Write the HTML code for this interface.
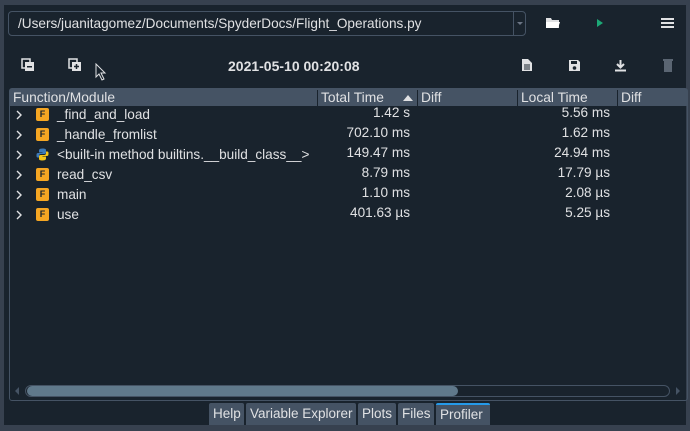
<!DOCTYPE html>
<html><head><style>
*{margin:0;padding:0;box-sizing:border-box}
body{width:690px;height:431px;background:#19232d;font-family:"Liberation Sans",sans-serif;color:#e0e1e3;position:relative;overflow:hidden;font-size:13px}
.abs{position:absolute}
.combo{left:8px;top:11px;width:518px;height:25px;border:1px solid #455364;border-radius:4px;background:#19232d}
.combo span{position:absolute;left:9px;top:4px;font-size:13.6px}
.combo .dd{position:absolute;right:0;top:0;width:12px;height:23px;border-left:1px solid #455364}
.table{left:9px;top:88px;width:679px;height:313px;border:1px solid #455364;border-radius:3px}
.hdr{left:10px;top:89px;width:677px;height:17px;background:#455364}
.hdr div{position:absolute;top:1px;font-size:13.8px;color:#e0e1e3;height:17px;border-right:1px solid #19232d;padding-left:3px}
.row{position:absolute;left:10px;height:20px;width:676px;font-size:13.6px}
.row .chev{position:absolute;left:6px;top:5px}
.F{position:absolute;left:26px;top:3px;width:13px;height:13px;background:#f5a623;border-radius:2px;color:#19232d;font-size:9px;font-weight:bold;text-align:center;line-height:13px}
.row .nm{position:absolute;left:47px;top:2px}
.row .t{position:absolute;right:276px;top:0}
.row .l{position:absolute;right:76px;top:0}
.tab{position:absolute;top:403px;height:22px;background:#455364;border-radius:2px 2px 0 0;font-size:13.5px;padding:3px 4px 0;color:#e0e1e3;white-space:nowrap}
</style></head><body>
<div class="abs" style="left:0;top:0;width:690px;height:5px;background:#37414f"></div>
<div class="abs" style="left:0;top:0;width:4px;height:431px;background:#37414f"></div>
<div class="abs" style="left:686px;top:0;width:4px;height:431px;background:#37414f"></div>
<div class="abs" style="left:0;top:425px;width:690px;height:6px;background:#37414f"></div>
<div class="abs combo"><span>/Users/juanitagomez/Documents/SpyderDocs/Flight_Operations.py</span><div class="dd"><div style="position:absolute;left:3px;top:10px;border-left:3px solid transparent;border-right:3px solid transparent;border-top:3px solid #6c7685"></div></div></div>
<svg class="abs" style="left:545px;top:16px" width="16" height="13"><path d="M1 2h5l1 2h7v8H1z" fill="#e0e1e3"/><path d="M1 6h14l-2 6H1z" fill="#fff"/></svg>
<svg class="abs" style="left:596px;top:18px" width="8" height="10"><path d="M1 1l6 4-6 4z" fill="#1ca876"/></svg>
<svg class="abs" style="left:661px;top:18px" width="13" height="10"><path d="M0 1h13M0 5h13M0 9h13" stroke="#e0e1e3" stroke-width="2"/></svg>
<svg class="abs" style="left:21px;top:58px" width="14" height="14"><rect x="1" y="1" width="8" height="9" fill="none" stroke="#e0e1e3" stroke-width="1.5"/><rect x="4" y="4" width="9" height="9" fill="#e0e1e3"/><rect x="6" y="8" width="5" height="1.5" fill="#19232d"/></svg>
<svg class="abs" style="left:68px;top:58px" width="14" height="14"><rect x="1" y="1" width="8" height="9" fill="none" stroke="#e0e1e3" stroke-width="1.5"/><rect x="4" y="4" width="9" height="9" fill="#e0e1e3"/><path d="M6 8.5h5M8.5 6v5" stroke="#19232d" stroke-width="1.5"/></svg>
<svg class="abs" style="left:95px;top:63px" width="12" height="18"><path d="M1 1v13l3-3 3 6 2-1-3-6h4z" fill="#19232d" stroke="#e0e1e3" stroke-width="1"/></svg>
<div class="abs" style="left:228px;top:58px;font-weight:bold;font-size:14px">2021-05-10 00:20:08</div>
<svg class="abs" style="left:521px;top:58px" width="12" height="14"><path d="M1 1h6l4 4v8H1z" fill="#e0e1e3"/><path d="M3 7h6M3 9h6M3 11h6" stroke="#19232d"/></svg>
<svg class="abs" style="left:568px;top:59px" width="13" height="13"><path d="M1 1h9l2 2v9H1z" fill="#e0e1e3"/><rect x="3" y="2" width="6" height="3" fill="#19232d"/><circle cx="6.5" cy="9" r="1.8" fill="#19232d"/></svg>
<svg class="abs" style="left:614px;top:59px" width="13" height="13"><path d="M6.5 1v7M3 5l3.5 3.5L10 5" stroke="#e0e1e3" stroke-width="2" fill="none"/><path d="M1 11.5h11" stroke="#e0e1e3" stroke-width="2"/></svg>
<svg class="abs" style="left:662px;top:58px" width="12" height="15"><rect x="2" y="3" width="8" height="11" fill="#5a6572"/><rect x="1" y="1" width="10" height="2" fill="#5a6572"/></svg>
<div class="abs table"></div>
<div class="abs hdr">
<div style="left:0;width:308px">Function/Module</div>
<div style="left:308px;width:100px">Total Time<span style="position:absolute;left:85px;top:5px;border-left:5px solid transparent;border-right:5px solid transparent;border-bottom:6px solid #e0e1e3"></span></div>
<div style="left:408px;width:100px">Diff</div>
<div style="left:508px;width:100px">Local Time</div>
<div style="left:608px;width:69px;border:none">Diff</div>
</div>
<svg width="0" height="0" style="position:absolute"><defs><symbol id="ch" viewBox="0 0 6 10"><path d="M1 1l4 4-4 4" stroke="#e0e1e3" stroke-width="1.4" fill="none"/></symbol></defs></svg>
<div class="row" style="top:105px"><svg class="chev" width="6" height="10"><use href="#ch"/></svg><span class="F">F</span><span class="nm">_find_and_load</span><span class="t">1.42 s</span><span class="l">5.56 ms</span></div>
<div class="row" style="top:125px"><svg class="chev" width="6" height="10"><use href="#ch"/></svg><span class="F">F</span><span class="nm">_handle_fromlist</span><span class="t">702.10 ms</span><span class="l">1.62 ms</span></div>
<div class="row" style="top:145px"><svg class="chev" width="6" height="10"><use href="#ch"/></svg><svg style="position:absolute;left:26px;top:3px" width="13" height="13"><path d="M6.5 0.5C3 0.5 3 2 3 3v1.5h3.5V5H2C0.5 5 0.5 6.5 0.5 7.5s0 2 1.5 2h1v-2c0-1 1-1.5 2-1.5h3.5c1 0 1.5-.5 1.5-1.5V2c0-1-1-1.5-3.5-1.5z" fill="#3d7ab8"/><path d="M6.5 12.5c3.5 0 3.5-1.5 3.5-2.5V8.5H6.5V8H11c1.5 0 1.5-1.5 1.5-2.5s0-2-1.5-2h-1v2c0 1-1 1.5-2 1.5H4.5C3.5 7 3 7.5 3 8.5V11c0 1 1 1.5 3.5 1.5z" fill="#f5c518"/></svg><span class="nm">&lt;built-in method builtins.__build_class__&gt;</span><span class="t">149.47 ms</span><span class="l">24.94 ms</span></div>
<div class="row" style="top:165px"><svg class="chev" width="6" height="10"><use href="#ch"/></svg><span class="F">F</span><span class="nm">read_csv</span><span class="t">8.79 ms</span><span class="l">17.79 µs</span></div>
<div class="row" style="top:185px"><svg class="chev" width="6" height="10"><use href="#ch"/></svg><span class="F">F</span><span class="nm">main</span><span class="t">1.10 ms</span><span class="l">2.08 µs</span></div>
<div class="row" style="top:205px"><svg class="chev" width="6" height="10"><use href="#ch"/></svg><span class="F">F</span><span class="nm">use</span><span class="t">401.63 µs</span><span class="l">5.25 µs</span></div>
<div class="abs" style="left:15px;top:387px;border-top:4px solid transparent;border-bottom:4px solid transparent;border-right:4px solid #455364"></div>
<div class="abs" style="left:25px;top:385px;width:645px;height:12px;border:1px solid #455364;border-radius:6px"></div>
<div class="abs" style="left:27px;top:386px;width:431px;height:10px;background:#60798b;border-radius:5px"></div>
<div class="abs" style="left:676px;top:387px;border-top:4px solid transparent;border-bottom:4px solid transparent;border-left:4px solid #455364"></div>
<div class="tab" style="left:209px;width:35px">Help</div>
<div class="tab" style="left:246px;width:110px">Variable Explorer</div>
<div class="tab" style="left:358px;width:38px">Plots</div>
<div class="tab" style="left:398px;width:36px">Files</div>
<div class="tab" style="left:436px;width:54px;border-top:2px solid #259ae9;padding-top:2px">Profiler</div>
</body></html>
